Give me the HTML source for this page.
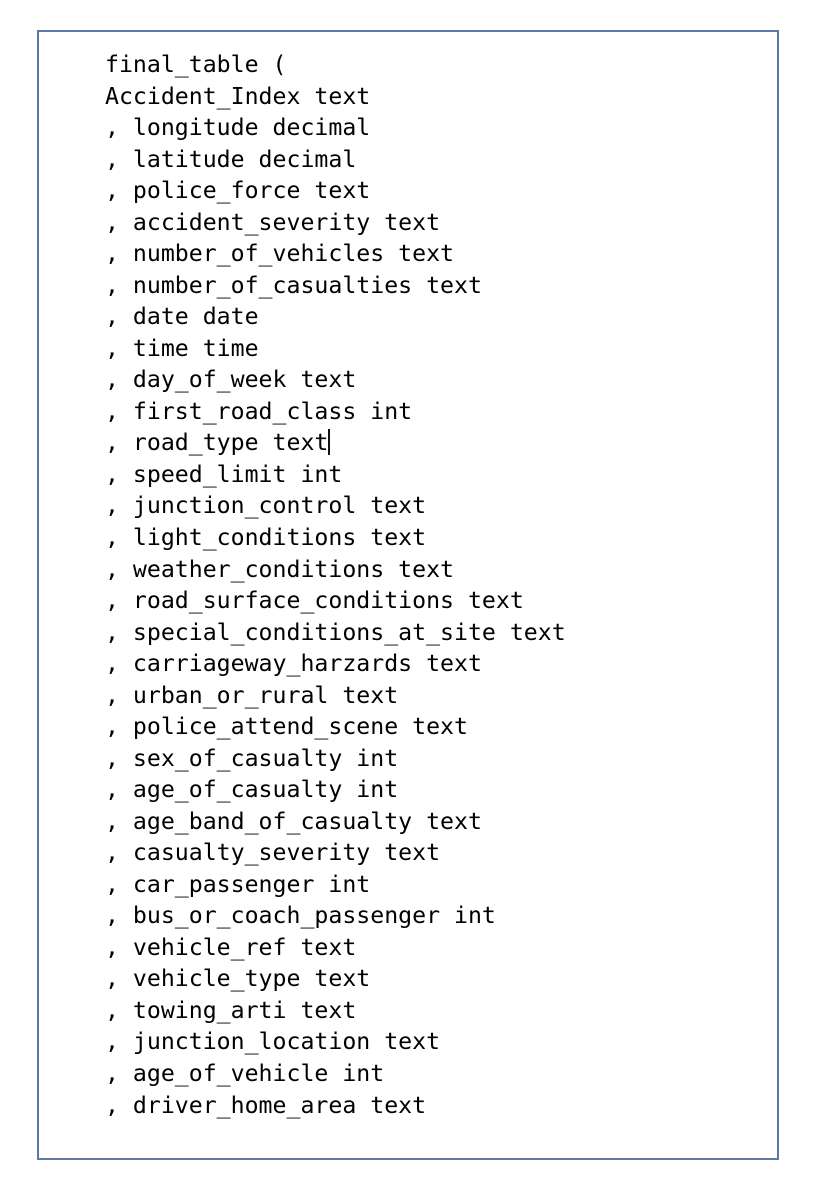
<!DOCTYPE html>
<html><head><meta charset="utf-8"><style>
html,body{margin:0;padding:0;background:#fff;width:832px;height:1194px;overflow:hidden}
.box{position:absolute;left:37px;top:30px;width:738px;height:1126px;border:2px solid #5b7ba6}
pre{position:absolute;left:105px;top:49px;margin:0;font-family:"DejaVu Sans Mono","Liberation Mono",monospace;font-size:23.2px;line-height:31.53px;color:#000}
.cur{display:inline-block;width:1.5px;height:26px;background:#111;vertical-align:-5px}
</style></head><body>
<div class="box"></div>
<pre>final_table (
Accident_Index text
, longitude decimal
, latitude decimal
, police_force text
, accident_severity text
, number_of_vehicles text
, number_of_casualties text
, date date
, time time
, day_of_week text
, first_road_class int
, road_type text<span class="cur"></span>
, speed_limit int
, junction_control text
, light_conditions text
, weather_conditions text
, road_surface_conditions text
, special_conditions_at_site text
, carriageway_harzards text
, urban_or_rural text
, police_attend_scene text
, sex_of_casualty int
, age_of_casualty int
, age_band_of_casualty text
, casualty_severity text
, car_passenger int
, bus_or_coach_passenger int
, vehicle_ref text
, vehicle_type text
, towing_arti text
, junction_location text
, age_of_vehicle int
, driver_home_area text</pre>
</body></html>
